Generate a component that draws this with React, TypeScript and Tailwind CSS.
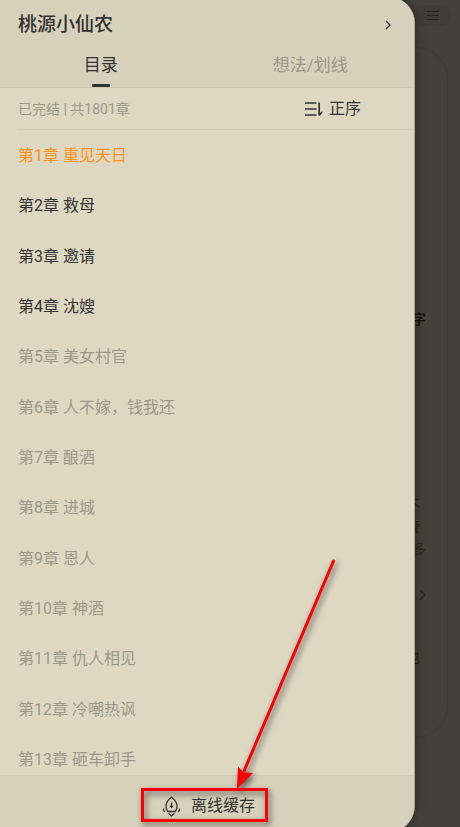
import { clsx } from "clsx"

type ChapterState = "current" | "ready" | "locked"

interface Chapter {
  id: number
  title: string
  state: ChapterState
}

const CHAPTERS: Chapter[] = [
  { id: 1, title: "重见天日", state: "current" },
  { id: 2, title: "救母", state: "ready" },
  { id: 3, title: "邀请", state: "ready" },
  { id: 4, title: "沈嫂", state: "ready" },
  { id: 5, title: "美女村官", state: "locked" },
  { id: 6, title: "人不嫁，钱我还", state: "locked" },
  { id: 7, title: "酿酒", state: "locked" },
  { id: 8, title: "进城", state: "locked" },
  { id: 9, title: "恩人", state: "locked" },
  { id: 10, title: "神酒", state: "locked" },
  { id: 11, title: "仇人相见", state: "locked" },
  { id: 12, title: "冷嘲热讽", state: "locked" },
  { id: 13, title: "砸车卸手", state: "locked" },
]

function ChevronIcon({ className }: { className?: string }) {
  return (
    <svg viewBox="0 0 6 10" fill="none" stroke="currentColor" className={className} aria-hidden="true">
      <path d="M1 1l4 4-4 4" strokeWidth="1.3" />
    </svg>
  )
}

function SortIcon() {
  return (
    <svg width="18" height="16" viewBox="0 0 18 16" fill="none" stroke="currentColor" strokeWidth="1.3" aria-hidden="true">
      <path d="M0 2h11.500M0 8h11.500M0 14h11.500" />
      <path d="M14.200 1.500v13" strokeWidth="1.7" />
      <path d="M14 14.600h1.200l2.300-3.200v-1.200L14.500 12z" fill="currentColor" stroke="none" />
    </svg>
  )
}

function RocketIcon() {
  return (
    <svg width="19" height="21" viewBox="0 0 19 21" fill="none" stroke="currentColor" strokeWidth="1.3" aria-hidden="true">
      <path d="M9.500 1.200C6 3.700 4 6.700 4 10.300c0 2.200.5 3.700 1.700 5.200h7.600c1.200-1.500 1.700-3 1.700-5.200 0-3.600-2-6.600-5.500-9.100z" strokeLinejoin="round" />
      <path d="M9.500 6.500v5" />
      <path d="M7.300 9.800h4.400l-2.200 2.700z" fill="currentColor" stroke="none" />
      <path d="M6.500 17.200l3 2.700 3-2.700" />
      <path d="M1.500 12.500c0 1.500.3 2.600 1.100 3.600M17.500 12.500c0 1.500-.3 2.600-1.100 3.600" />
    </svg>
  )
}

// Book detail page, dimmed while the drawer is open
function DimmedPage() {
  return (
    <main className="flex min-h-screen flex-col bg-[#42413a] text-sm text-[#1c1c1a]">
      <div className="flex justify-end pt-[5px] pr-2">
        <button type="button" aria-label="菜单" className="flex h-[21px] w-[38px] items-center justify-center rounded-full bg-[#3e3d38] text-[#22221f]">
          <svg width="12" height="10" viewBox="0 0 12 10" stroke="currentColor" aria-hidden="true">
            <path d="M0 .5h12M0 4.500h12M0 8.500h12" />
          </svg>
        </button>
      </div>
      <section className="mt-[21px] mr-3 flex h-[691px] flex-col items-end rounded-r-[32px] border border-[#3c3b37] pr-[21px]">
        <p className="mt-[259px] leading-6 font-medium text-[#11110f]">字</p>
        <p className="mt-[162px] mr-1.5 leading-6 text-[#22221f]">不</p>
        <p className="mr-1.5 leading-5 text-[#22221f]">管</p>
        <p className="leading-6 text-[#2b2a26]">多</p>
        <ChevronIcon className="mt-7 h-3 w-[7px] text-[#282825]" />
        <p className="mt-11 mr-1.5 leading-6 text-[#22221f]">也</p>
      </section>
    </main>
  )
}

function ChapterRow({ chapter }: { chapter: Chapter }) {
  return (
    <li className="flex">
      <a
        href={`#chapter-${chapter.id}`}
        aria-current={chapter.state === "current" ? "true" : undefined}
        className={clsx(
          "flex flex-1 items-center px-[18px] pt-0.5",
          chapter.state === "current" && "text-[#ff9212]",
          chapter.state === "ready" && "text-[#333431]",
          chapter.state === "locked" && "text-[#9b9888]"
        )}
      >
        第{chapter.id}章 {chapter.title}
      </a>
    </li>
  )
}

// Red frame and arrow pointing at the cache button
function Callout() {
  return (
    <svg
      className="pointer-events-none absolute bottom-0 left-[130px] drop-shadow-[2px_3px_3px_rgba(0,0,0,0.6)]"
      width="220"
      height="277"
      viewBox="130 550 220 277"
      aria-hidden="true"
    >
      <rect x="142.500" y="789.500" width="124" height="31" fill="none" stroke="#fe0000" strokeWidth="3" />
      <path d="M333.500 561L244 771" stroke="#fe0000" strokeWidth="3" strokeLinecap="round" />
      <path d="M237 789l1-22.500 5.500 6 9.500.5z" fill="#fe0000" />
    </svg>
  )
}

function CatalogDrawer() {
  return (
    <aside className="absolute -top-[3px] right-[45px] -bottom-[5px] left-0 flex flex-col overflow-hidden rounded-r-[26px] border-r border-[#a9a78f] bg-[#ded8c3] shadow-[2px_0_8px_rgba(0,0,0,0.3)]">
      <header className="border-b border-[#cfc9b5] bg-[#d7d1bc] pt-1">
        <div className="flex h-12 items-center justify-between pr-[23px] pl-[18px]">
          <h1 className="text-[19px] font-medium text-[#333431]">桃源小仙农</h1>
          <button type="button" aria-label="书籍详情" className="text-[#333431]">
            <ChevronIcon className="h-[10px] w-[6px]" />
          </button>
        </div>
        <nav className="-mr-px -ml-1 grid h-[38px] grid-cols-2 text-[17px]">
          <button type="button" aria-current="page" className="flex flex-col items-center justify-between pt-1 text-[#333431]">
            <span className="leading-6">目录</span>
            <span className="h-[3px] w-[18px] rounded-[1px] bg-[#333431]" />
          </button>
          <button type="button" className="flex flex-col items-center pt-1 text-[#9b9888]">
            <span className="leading-6">想法/划线</span>
          </button>
        </nav>
      </header>

      <div className="ml-[18px] flex h-[42px] items-center justify-between border-b border-[#d5cfba] pt-px pr-[53px]">
        <p className="text-sm text-[#9b9888]">已完结 | 共1801章</p>
        <button type="button" className="flex items-center gap-1.5 text-base text-[#333431]">
          <SortIcon />
          正序
        </button>
      </div>

      <ul className="-mb-[9px] grid flex-1 auto-rows-fr text-base">
        {CHAPTERS.map((chapter) => (
          <ChapterRow key={chapter.id} chapter={chapter} />
        ))}
      </ul>

      <footer className="relative flex justify-center border-t border-[#cfc9b5] bg-[#d7d1bc] pt-3.5 pb-2.5 pl-[3px]">
        <button type="button" className="flex h-8 items-center gap-2.5 text-base text-[#333431]">
          <RocketIcon />
          离线缓存
        </button>
      </footer>
    </aside>
  )
}

export default function App() {
  return (
    <div className="relative overflow-hidden font-['Roboto','Noto_Sans_CJK_SC',sans-serif]" lang="zh-CN">
      <DimmedPage />
      <CatalogDrawer />
      <Callout />
    </div>
  )
}
